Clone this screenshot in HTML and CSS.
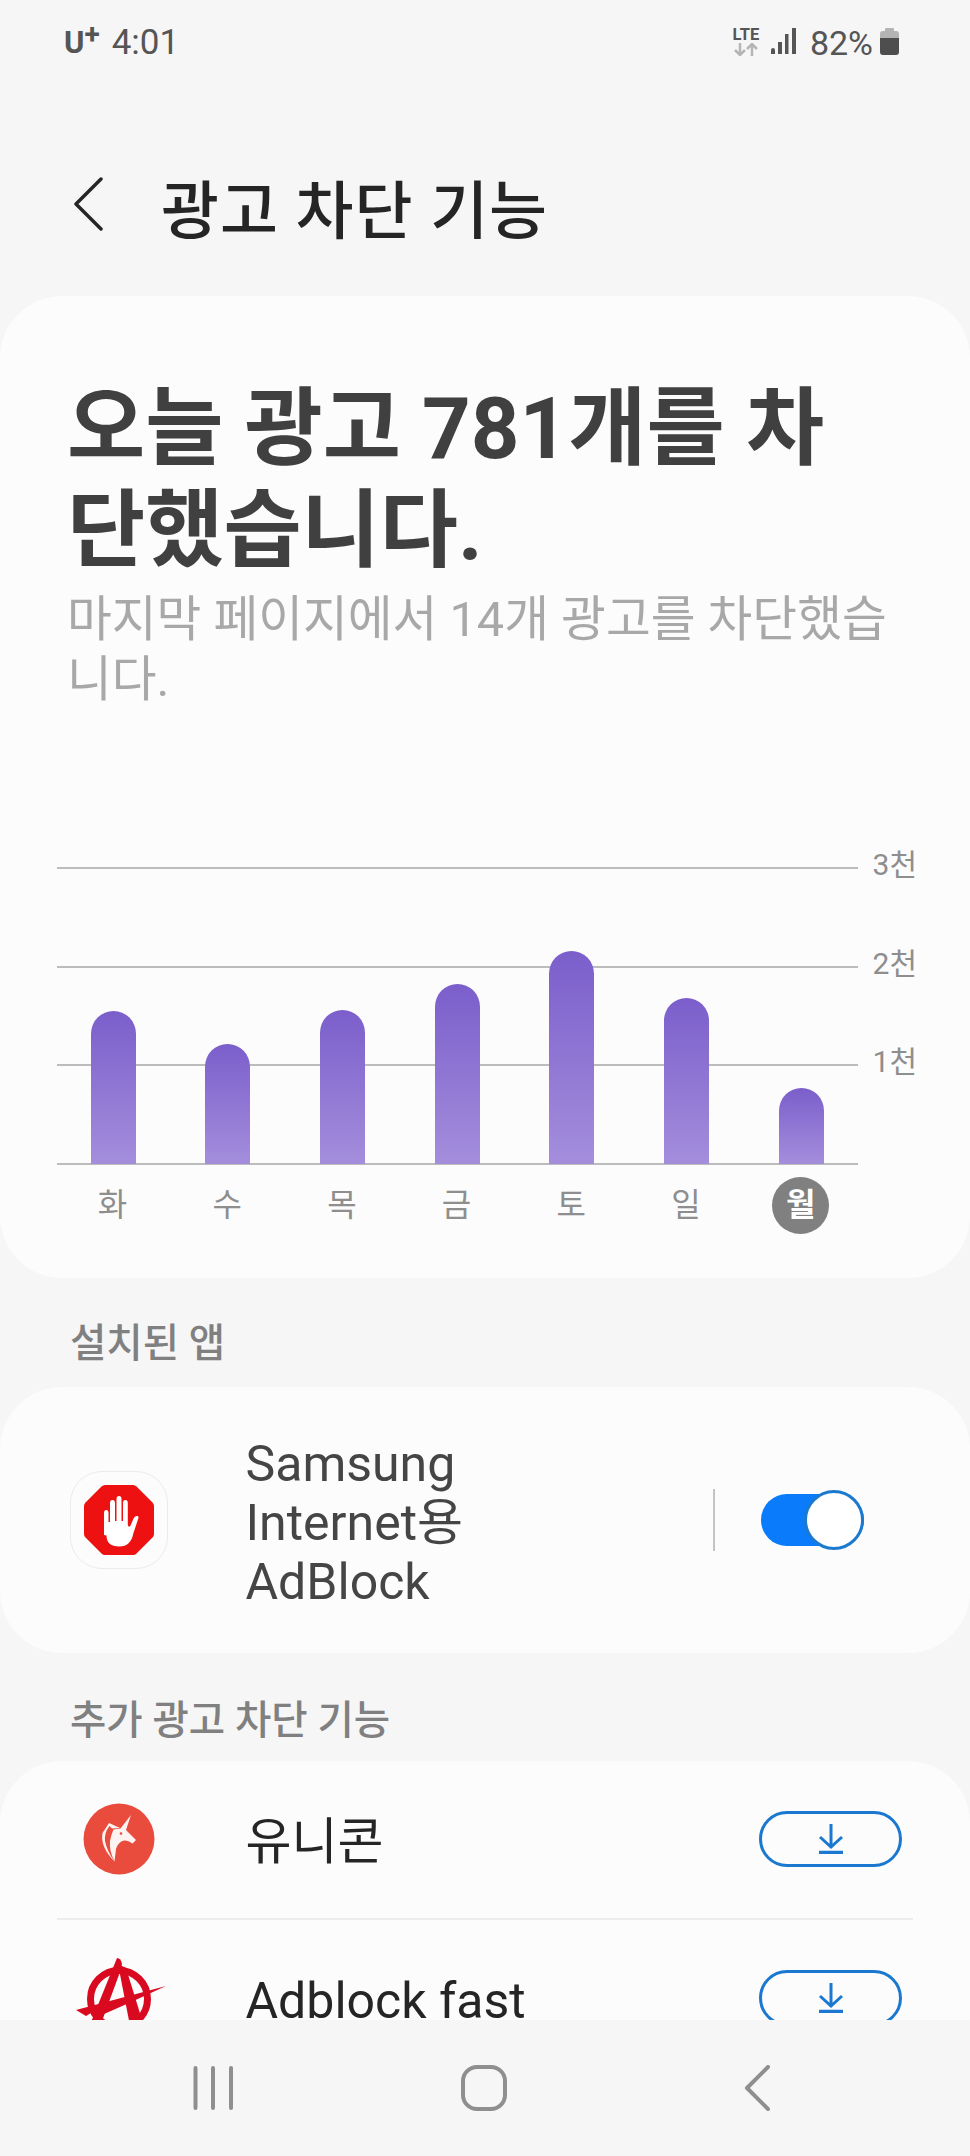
FILE: index.html
```html
<!DOCTYPE html>
<html lang="ko">
<head>
    <meta charset="UTF-8">
    <meta name="viewport" content="width=device-width, initial-scale=1.0">
    <title>광고 차단 기능</title>
    <link rel="stylesheet" href="styles.css">
</head>
<body>
    <div class="status-bar">
        <div class="status-left">
            <span class="carrier">U<sup>+</sup></span>
            <span class="clock">4:01</span>
        </div>
        <div class="status-right">
            <span class="lte">LTE
                <svg class="lte-arrows" width="26" height="13" viewBox="0 0 26 13"><path d="M7 0v12M2 7l5 5 5-5" fill="none" stroke="#b5b5b5" stroke-width="2.500"/><path d="M19 13V1M14 6l5-5 5 5" fill="none" stroke="#b5b5b5" stroke-width="2.500"/></svg>
            </span>
            <svg class="signal" width="25" height="26" viewBox="0 0 25 26"><path d="M0 22q0-2 2-2t2 2v4H0zM7 14h4v12H7zM14 6h3.500v20H14zM21 0h4v26h-4z" fill="#555"/></svg>
            <span class="battery-pct">82%</span>
            <svg class="battery" width="19" height="27" viewBox="0 0 19 27"><path d="M5 1q0-1 1-1h7q1 0 1 1v2h2q3 0 3 3v4H0V6q0-3 3-3h2z" fill="#b4b4b4"/><path d="M0 10h19v14q0 3-3 3H3q-3 0-3-3z" fill="#4e4e4e"/></svg>
        </div>
    </div>

    <div class="title-bar">
        <svg class="back" width="32" height="54" viewBox="0 0 32 54"><path d="M29 2L4 27l25 25" fill="none" stroke="#252525" stroke-width="3.500" stroke-linecap="round" stroke-linejoin="round"/></svg>
        <h1>광고 차단 기능</h1>
    </div>

    <div class="scroll">
        <div class="card summary">
            <h2>오늘 광고 781개를 차단했습니다.</h2>
            <p class="sub">마지막 페이지에서 14개 광고를 차단했습니다.</p>

            <div class="chart">
                <div class="grid-row"><span class="line"></span><span class="tick">3천</span></div>
                <div class="grid-row"><span class="line"></span><span class="tick">2천</span></div>
                <div class="grid-row"><span class="line"></span><span class="tick">1천</span></div>
                <div class="grid-row last"><span class="line"></span></div>
                <div class="bars">
                    <div class="bar" style="height: 153px"></div>
                    <div class="bar" style="height: 120px"></div>
                    <div class="bar" style="height: 154px"></div>
                    <div class="bar" style="height: 180px"></div>
                    <div class="bar" style="height: 213px"></div>
                    <div class="bar" style="height: 166px"></div>
                    <div class="bar" style="height: 76px"></div>
                </div>
            </div>
            <div class="days">
                <span>화</span><span>수</span><span>목</span><span>금</span><span>토</span><span>일</span><span class="today">월</span>
            </div>
        </div>

        <div class="section-label">설치된 앱</div>
        <div class="card app-card">
            <div class="app-row">
                <div class="app-icon outlined">
                    <svg width="72" height="72" viewBox="0 0 72 72">
                        <path d="M22 1h28q2 0 3.500 1.500l16 16q1.500 1.500 1.500 3.500v28q0 2-1.500 3.500l-16 16q-1.500 1.500-3.500 1.500H22q-2 0-3.500-1.500l-16-16Q1 52 1 50V22q0-2 1.500-3.500l16-16Q20 1 22 1z" fill="#ee1111"/>
                        <path d="M21 51V29q0-3 2.200-3t2.300 3v9h1.500V19q0-3 2.500-3t2.500 3v18h1.500V15q0-3 2.500-3t2.500 3v22h1.500V19q0-3 2.400-3t2.400 3v22q1 3 2.500 1l3.500-8q1.500-2.500 3.800-2 1.400.500.700 2.500l-5 15q-2.500 13-14 13-12.800 0-12.800-11z" fill="#fff"/>
                    </svg>
                </div>
                <div class="app-name">Samsung Internet용 AdBlock</div>
                <div class="toggle-wrap">
                    <span class="toggle"><span class="knob"></span></span>
                </div>
            </div>
        </div>

        <div class="section-label second">추가 광고 차단 기능</div>
        <div class="card">
            <div class="app-row small">
                <div class="app-icon">
                    <svg width="72" height="72" viewBox="0 0 72 72">
                        <circle cx="36" cy="36" r="35.500" fill="#e94b3c"/>
                        <path d="M48 12L43 27l10 10-3.500 3.500Q45 37 41 37.500 35 39 33 46l-1.500 12.500Q26 48 27 38q1-6 3.500-11.500L37.500 25.500z" fill="#fdf3f0"/>
                        <path d="M26 20l11 5-8 .5-2.500-2.500Q21 30 22 38q2 10 9.500 20.500Q17 44 19.500 30z" fill="#fdf3f0"/>
                        <circle cx="38" cy="30.500" r="1.300" fill="#e94b3c"/>
                    </svg>
                </div>
                <div class="app-name dark">유니콘</div>
                <button class="get-btn">
                    <svg width="26" height="30" viewBox="0 0 26 30"><path d="M13 0v22M2 13l11 10 11-10" fill="none" stroke="#1a78d0" stroke-width="3"/><path d="M1 28.500h24" stroke="#1a78d0" stroke-width="3.500"/></svg>
                </button>
            </div>
            <div class="row-divider"></div>
            <div class="app-row small">
                <div class="app-icon">
                    <svg width="96" height="96" viewBox="0 0 96 96">
                        <circle cx="48" cy="49" r="28.500" fill="none" stroke="#d90a20" stroke-width="7"/>
                        <path d="M46 8q4 0 5 6l-2 8-22 60H16z" fill="#d90a20"/>
                        <path d="M47 14l8 4 21 68H61z" fill="#d90a20"/>
                        <path d="M5 60L95 36 58 53 24 68 20 63l-5 3z" fill="#d90a20"/>
                    </svg>
                </div>
                <div class="app-name dark">Adblock fast</div>
                <button class="get-btn">
                    <svg width="26" height="30" viewBox="0 0 26 30"><path d="M13 0v22M2 13l11 10 11-10" fill="none" stroke="#1a78d0" stroke-width="3"/><path d="M1 28.500h24" stroke="#1a78d0" stroke-width="3.500"/></svg>
                </button>
            </div>
        </div>
    </div>

    <div class="nav-bar">
        <svg width="40" height="44" viewBox="0 0 40 44"><path d="M2.500 2v40M20 2v40M38 2v40" stroke="#8f8f8f" stroke-width="4" stroke-linecap="round"/></svg>
        <svg class="nav-home" width="46" height="46" viewBox="0 0 46 46"><rect x="2" y="2" width="42" height="42" rx="14" fill="none" stroke="#8f8f8f" stroke-width="4"/></svg>
        <svg width="26" height="46" viewBox="0 0 26 46"><path d="M24 2L3 23l21 21" fill="none" stroke="#8f8f8f" stroke-width="4" stroke-linecap="round" stroke-linejoin="round"/></svg>
    </div>
</body>
</html>
```

FILE: styles.css
```css
* {
    box-sizing: border-box;
}
body {
    margin: 0;
    height: 2156px;
    overflow: hidden;
    display: flex;
    flex-direction: column;
    background: #f6f6f6;
    font-family: Roboto, "Noto Sans CJK KR", sans-serif;
}
.status-bar {
    height: 82px;
    flex-shrink: 0;
    padding: 26px 71px 0 64px;
    display: flex;
    justify-content: space-between;
    align-items: flex-start;
    color: #555;
}
.status-left {
    display: flex;
    align-items: center;
    gap: 12px;
}
.carrier {
    font-size: 31px;
    font-weight: 700;
    line-height: 34px;
}
.carrier sup {
    font-size: 28px;
    line-height: 0;
    vertical-align: 9px;
}
.clock {
    font-size: 35px;
    line-height: 34px;
}
.status-right {
    display: flex;
    align-items: flex-start;
}
.lte {
    display: flex;
    flex-direction: column;
    align-items: center;
    width: 30px;
    margin-top: 1px;
    font-size: 16.500px;
    font-weight: 700;
    line-height: 15px;
    color: #555;
}
.lte-arrows {
    margin-top: 1px;
}
.signal {
    margin: 2px 14px 0 10px;
}
.battery-pct {
    font-size: 34px;
    line-height: 34px;
}
.battery {
    margin: 2px 0 0 7px;
}
.title-bar {
    height: 214px;
    padding: 32px 0 0 72px;
    display: flex;
    align-items: center;
    flex-shrink: 0;
}
.back {
    flex-shrink: 0;
    margin-bottom: 2px;
}
h1 {
    margin: 0 0 0 57px;
    font-size: 63px;
    font-weight: 500;
    color: #252525;
    letter-spacing: 1px;
}
.scroll {
    flex: 1;
    min-height: 0;
    overflow: hidden;
}
.card {
    background: #fcfcfc;
    border-radius: 62px;
}
.summary {
    height: 982px;
    padding: 82px 0 0 0;
}
h2 {
    margin: 0;
    padding: 0 70px 0 67px;
    font-size: 85px;
    font-weight: 700;
    line-height: 102px;
    color: #404040;
}
.sub {
    margin: 8px 0 0;
    padding: 0 70px 0 67px;
    font-size: 48.700px;
    line-height: 60px;
    color: #a8a8a8;
}
.chart {
    position: relative;
    margin: 157px 0 0 57px;
    width: 860px;
}
.grid-row {
    height: 98.500px;
    display: flex;
    align-items: flex-start;
}
.grid-row.last {
    height: 2px;
}
.line {
    width: 801px;
    height: 2px;
    background: #bcbcbc;
}
.tick {
    margin: -20px 0 0 15px;
    font-size: 30px;
    line-height: 36px;
    white-space: nowrap;
    color: #8e8e8e;
}
.bars {
    position: absolute;
    left: 33.500px;
    bottom: 1px;
    display: flex;
    align-items: flex-end;
    gap: 69.700px;
}
.bar {
    width: 45px;
    border-radius: 23px 23px 0 0;
    background: linear-gradient(180deg, #7b5ecb 0%, #a48edc 100%);
}
.days {
    display: flex;
    gap: 57.700px;
    margin: 12px 0 0 84px;
}
.days span {
    width: 57px;
    height: 57px;
    font-size: 32px;
    line-height: 57px;
    text-align: center;
    color: #8e8e8e;
}
.days .today {
    border-radius: 50%;
    background: #808080;
    color: #fff;
    font-weight: 700;
}
.section-label {
    height: 109px;
    padding: 44px 0 0 70px;
    font-size: 39.500px;
    font-weight: 500;
    line-height: 44px;
    color: #808080;
}
.section-label.second {
    height: 108px;
    padding-top: 46px;
}
.app-card {
    height: 266px;
}
.app-row {
    display: flex;
    align-items: center;
    height: 266px;
    padding-left: 70px;
}
.app-row.small {
    height: 157px;
    padding-bottom: 2px;
}
.app-icon {
    width: 98px;
    height: 98px;
    flex-shrink: 0;
    border-radius: 32px;
    display: flex;
    align-items: center;
    justify-content: center;
}
.app-icon.outlined {
    border: 1.500px solid #efeaea;
}
.app-name {
    flex: 1;
    margin-left: 77.500px;
    max-width: 300px;
    padding-top: 6px;
    font-size: 50px;
    line-height: 59px;
    color: #454545;
}
.app-name.dark {
    color: #252525;
    max-width: none;
    line-height: 34px;
}
.toggle-wrap {
    height: 62px;
    margin-left: 167px;
    padding-left: 46px;
    border-left: 2px solid #c4c4c4;
    display: flex;
    align-items: center;
}
.toggle {
    position: relative;
    display: block;
    width: 103px;
    height: 52px;
    border-radius: 26px;
    background: #0a7bfa;
}
.knob {
    position: absolute;
    right: 0;
    top: -4px;
    width: 60px;
    height: 60px;
    border-radius: 50%;
    background: #fff;
    border: 3px solid #1b7ad0;
}
.get-btn {
    width: 143px;
    height: 56px;
    margin-right: 68px;
    padding: 0;
    border: 3px solid #1a78d0;
    border-radius: 28px;
    background: transparent;
    display: flex;
    align-items: center;
    justify-content: center;
}
.row-divider {
    height: 2px;
    margin: 0 57px;
    background: #ececec;
}
.nav-bar {
    height: 136px;
    flex-shrink: 0;
    background: #f6f6f6;
    padding: 0 200px 0 193px;
    display: flex;
    align-items: center;
    justify-content: space-between;
}
.nav-home {
    margin-right: 10px;
}
```
